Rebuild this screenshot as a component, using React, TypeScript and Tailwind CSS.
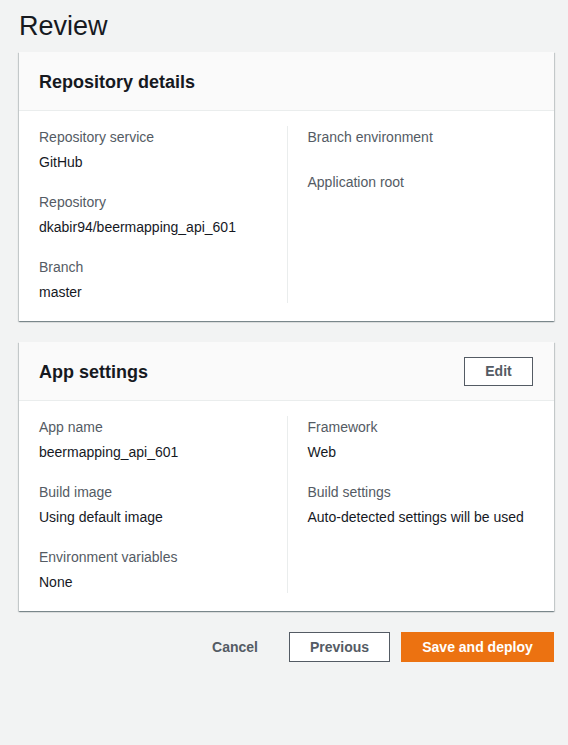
import React from "react";

type Item = { label: string; value?: string };

function Field({ label, value }: Item) {
  return (
    <div className="flex flex-col gap-[3px]">
      <div className="text-[14px] leading-[22px] text-[#545b64]">{label}</div>
      {value ? (
        <div className="text-[14px] leading-[22px] text-[#16191f]">{value}</div>
      ) : (
        <div className="h-[2px]" />
      )}
    </div>
  );
}

function Card({
  title,
  left,
  right,
  action,
}: {
  title: string;
  left: Item[];
  right: Item[];
  action?: React.ReactNode;
}) {
  return (
    <div className="ml-[19px] w-[535px] bg-white shadow-[0_1px_1px_0_rgba(0,28,36,0.3),1px_1px_1px_0_rgba(0,28,36,0.15),-1px_1px_1px_0_rgba(0,28,36,0.15)]">
      <div className="flex h-[59px] items-center justify-between border-b border-[#eaeded] bg-[#fafafa] pl-[20px] pr-[21px]">
        <h2 className="pt-[2px] text-[18px] font-bold leading-[22px] text-[#16191f]">{title}</h2>
        {action}
      </div>
      <div className="grid grid-cols-2 px-[20px] pb-[18px] pt-[15px]">
        <div className="flex flex-col gap-[18px]">
          {left.map((it) => (
            <Field key={it.label} {...it} />
          ))}
        </div>
        <div className="flex flex-col gap-[18px] border-l border-[#eaeded] pl-[20px]">
          {right.map((it) => (
            <Field key={it.label} {...it} />
          ))}
        </div>
      </div>
    </div>
  );
}

export default function App() {
  return (
    <div
      className="min-h-screen bg-[#f2f3f3] pb-[20px]"
      style={{ fontFamily: '"Liberation Sans", Arial, sans-serif' }}
    >
      <h1 className="pl-[19px] pt-[8px] text-[27px] font-normal leading-[36px] text-[#16191f]">Review</h1>
      <div className="mt-[8px] flex flex-col gap-[21px]">
        <Card
          title="Repository details"
          left={[
            { label: "Repository service", value: "GitHub" },
            { label: "Repository", value: "dkabir94/beermapping_api_601" },
            { label: "Branch", value: "master" },
          ]}
          right={[{ label: "Branch environment" }, { label: "Application root" }]}
        />
        <Card
          title="App settings"
          action={
            <button className="flex h-[29px] w-[69px] items-center justify-center border border-[#545b64] bg-white text-[14px] font-bold text-[#545b64]">
              Edit
            </button>
          }
          left={[
            { label: "App name", value: "beermapping_api_601" },
            { label: "Build image", value: "Using default image" },
            { label: "Environment variables", value: "None" },
          ]}
          right={[
            { label: "Framework", value: "Web" },
            { label: "Build settings", value: "Auto-detected settings will be used" },
          ]}
        />
      </div>
      <div className="ml-[19px] mt-[21px] flex w-[535px] items-center justify-end gap-[11px]">
        <button className="flex h-[29px] items-center justify-center px-[20px] text-[14px] font-bold text-[#545b64]">
          Cancel
        </button>
        <button className="flex h-[30px] w-[101px] items-center justify-center border border-[#545b64] bg-white text-[14px] font-bold text-[#545b64]">
          Previous
        </button>
        <button className="flex h-[30px] w-[153px] items-center justify-center border border-[#ec7211] bg-[#ec7211] text-[14px] font-bold text-white">
          Save and deploy
        </button>
      </div>
    </div>
  );
}
